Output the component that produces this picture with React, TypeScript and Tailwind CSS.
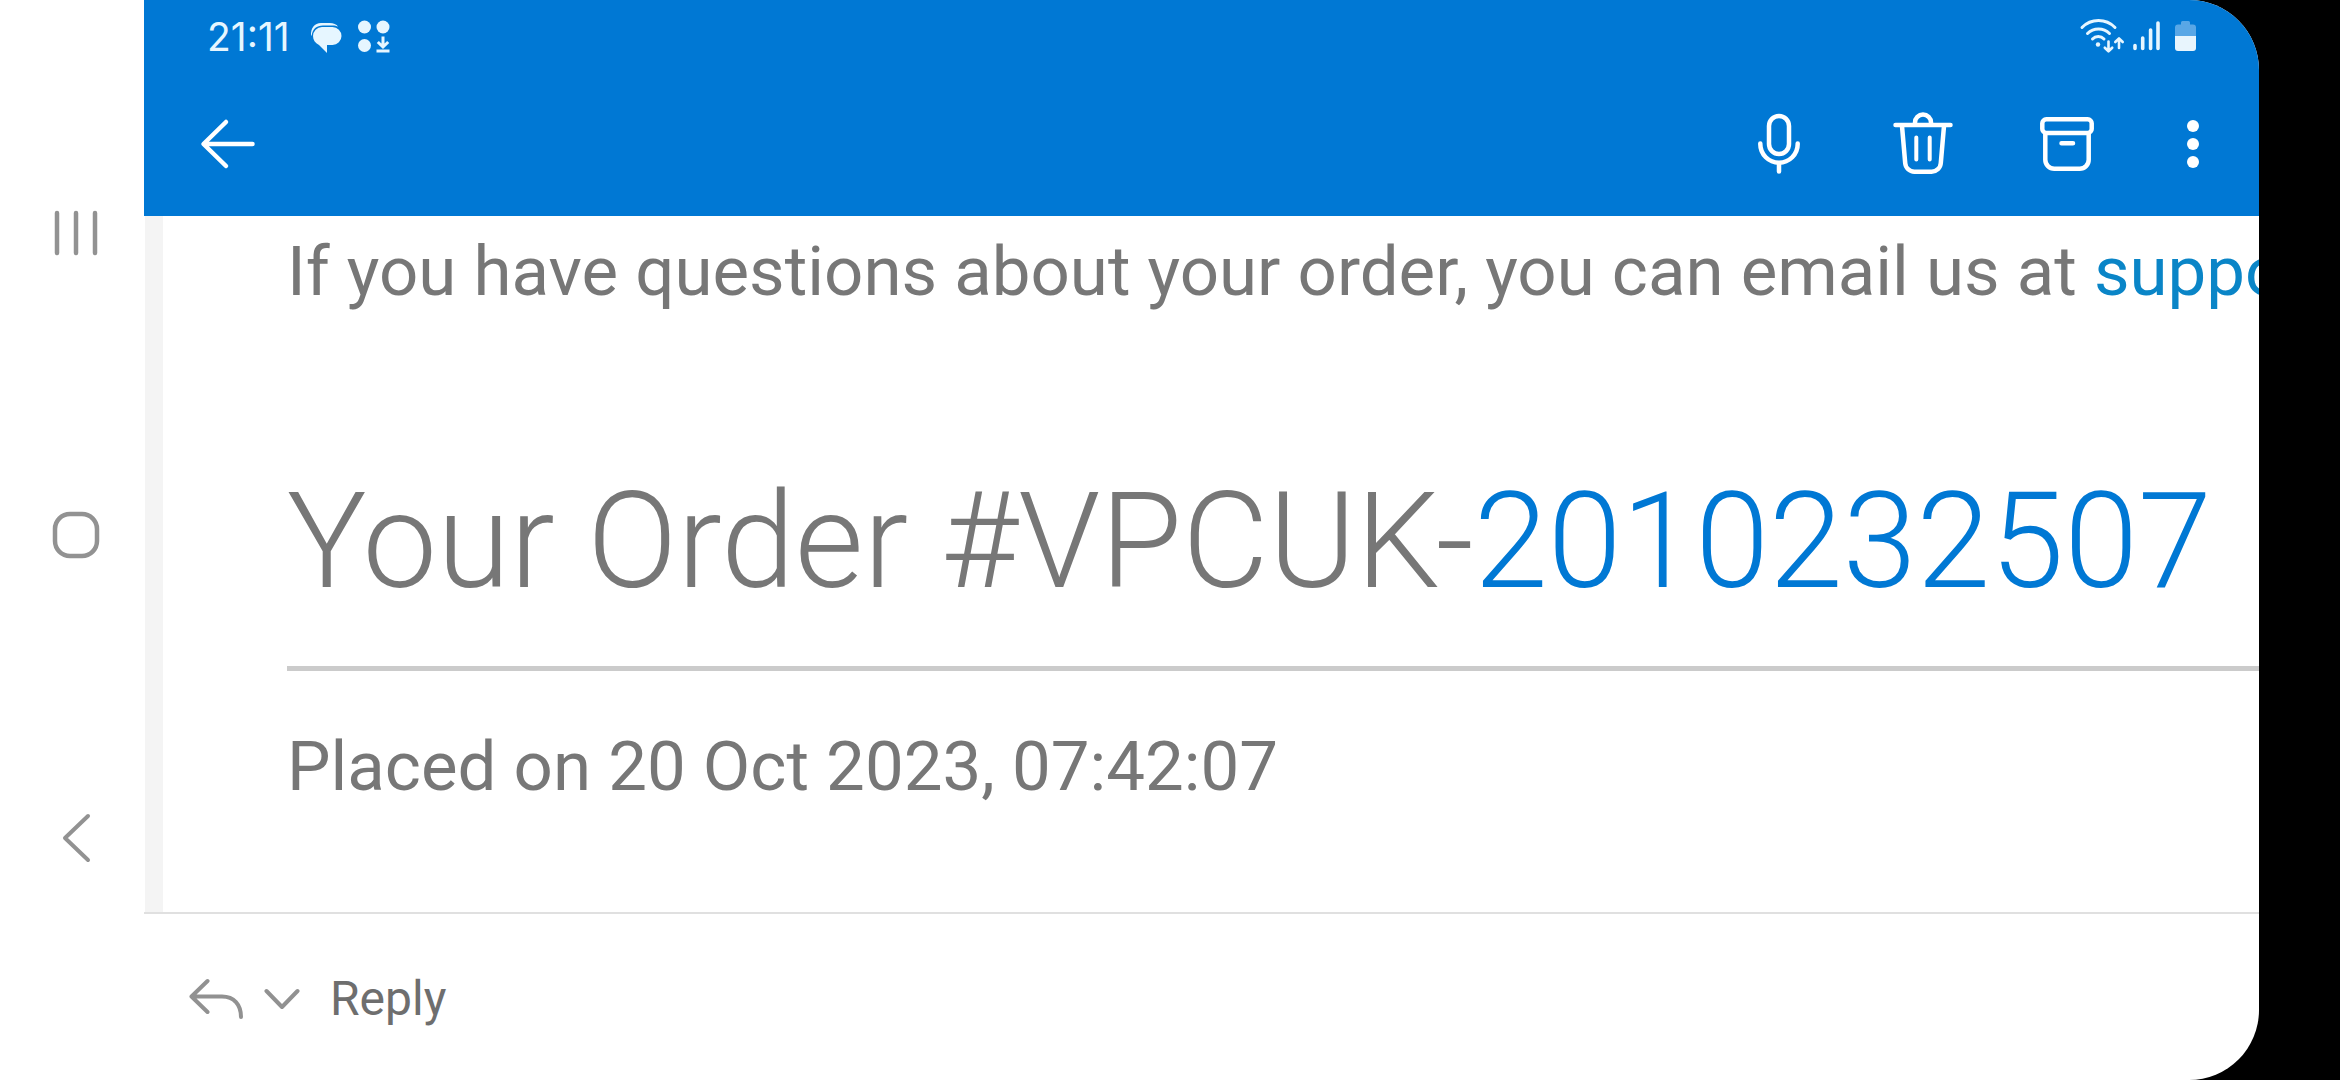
import type { ReactNode } from "react";

const Icon = ({ children }: { children: ReactNode }) => (
  <svg
    viewBox="0 0 72 72"
    className="w-18 h-18"
    fill="none"
    stroke="currentColor"
    strokeWidth="4.5"
    strokeLinecap="round"
    strokeLinejoin="round"
    aria-hidden="true"
  >
    {children}
  </svg>
);

function SystemNav() {
  return (
    <nav className="flex flex-col shrink-0 w-36 pt-[82px] pb-[91px] pl-2 text-[#929292]">
      <button aria-label="Recent apps" className="flex-1 flex items-center justify-center">
        <Icon>
          <path d="M17 16v40M36 16v40M55 16v40" />
        </Icon>
      </button>
      <button aria-label="Home" className="flex-1 flex items-center justify-center">
        <Icon>
          <rect x="15" y="15" width="42" height="42" rx="15" />
        </Icon>
      </button>
      <button aria-label="Back" className="flex-1 flex items-center justify-center">
        <Icon>
          <path d="M48 14L25 36l23 22" strokeWidth="4" />
        </Icon>
      </button>
    </nav>
  );
}

function StatusBar() {
  return (
    <div className="flex items-center h-18 pl-[63px] pr-[63px] text-[#e6f6ff]">
      <span className="font-[Inter,sans-serif] text-[39px] leading-none">21:11</span>

      {/* Notifications */}
      <svg viewBox="0 0 32 32" className="w-8 h-8 ml-5 mt-1" fill="currentColor" aria-hidden="true">
        <path d="M1 13.5C.6 6 4.5 1 11 1h8.5c4 0 7 1.3 8.5 3.6C26.5 3.7 24.8 3.400 22.500 3.400H13C6.500 3.400 2.500 7 1.700 13.500z" />
        <path d="M12 5h10.500a9 9 0 0 1 0 18H17v8l-8-8C5 21 3 18 3 14a9 9 0 0 1 9-9z" />
      </svg>
      <svg viewBox="0 0 32 34" className="w-8 h-[34px] ml-4" fill="currentColor" aria-hidden="true">
        <circle cx="6.500" cy="8" r="6.500" />
        <circle cx="25" cy="8" r="6.500" />
        <circle cx="6.500" cy="26.500" r="6.500" />
        <path
          d="M25 17.500v10M19.800 23l5.200 5 5.200-5M18.500 32h13"
          fill="none"
          stroke="currentColor"
          strokeWidth="3"
        />
      </svg>

      {/* Wifi, signal, battery */}
      <svg
        viewBox="0 0 46 36"
        className="w-[46px] h-9 ml-auto"
        fill="none"
        stroke="currentColor"
        strokeWidth="3"
        strokeLinecap="round"
        strokeLinejoin="round"
        aria-hidden="true"
      >
        <path d="M3 9.500A23 23 0 0 1 36 9.500M8.500 15.500a15.500 15.500 0 0 1 22 0M13.500 21a8 8 0 0 1 11.500 0" />
        <circle cx="19" cy="26.500" r="2.200" fill="currentColor" stroke="none" />
        <path d="M29.500 23.500V33M25.800 29.700l3.700 3.600 3.700-3.600M40 30V20.500M36.300 24l3.700-3.600L43.700 24" strokeWidth="2.600" />
      </svg>
      <svg
        viewBox="0 0 28 32"
        className="w-7 h-8 ml-2"
        stroke="currentColor"
        strokeWidth="3.600"
        strokeLinecap="round"
        aria-hidden="true"
      >
        <path d="M2 25.500v3M9.700 18v10.500M17.600 10v18.500M25 3v25.500" />
      </svg>
      <svg viewBox="0 0 21 32" className="w-[21px] h-8 ml-[14px]" aria-hidden="true">
        <path d="M6 2.500Q6 1 7.500 1h6Q15 1 15 2.500V4.500h3Q21 4.500 21 7.500V17H0V7.500Q0 4.500 3 4.500h3z" fill="#59a7e6" />
        <path d="M0 16h21V28Q21 31 18 31H3Q0 31 0 28z" fill="#e8f5fd" />
      </svg>
    </div>
  );
}

function AppBar() {
  return (
    <div className="flex items-center h-36 pl-12 pr-3 text-white">
      <button aria-label="Navigate up">
        <Icon>
          <path d="M34 14L11.500 36 34 58M12 36h48.500" />
        </Icon>
      </button>
      <div className="flex items-center ml-auto">
        <button aria-label="Dictate" className="w-36 flex justify-center">
          <Icon>
            <rect x="26" y="8" width="20" height="38" rx="10" />
            <path d="M17.300 35.500v.5a18.700 18.700 0 0 0 37.400 0v-.5M36 55v8.500" />
          </Icon>
        </button>
        <button aria-label="Delete" className="w-36 flex justify-center">
          <Icon>
            <path d="M8.500 17h55M28 16v-1.500a8 8 0 0 1 16 0V16" />
            <path d="M15 18l3.200 37a9.200 9.200 0 0 0 9.200 8.700h17.200a9.200 9.200 0 0 0 9.200-8.700L57 18" />
            <path d="M29.300 29.500v22M42.700 29.500v22" strokeWidth="4" />
          </Icon>
        </button>
        <button aria-label="Archive" className="w-36 flex justify-center">
          <Icon>
            <rect x="11.300" y="11.300" width="49.400" height="13.600" rx="4" />
            <path d="M14.300 26v25.700a9 9 0 0 0 9 9h25.400a9 9 0 0 0 9-9V26M30.500 35.300h11.500" />
          </Icon>
        </button>
        <button aria-label="More options" className="w-27 flex justify-center">
          <Icon>
            <g fill="currentColor" stroke="none">
              <circle cx="36" cy="18" r="6" />
              <circle cx="36" cy="36" r="6" />
              <circle cx="36" cy="54" r="6" />
            </g>
          </Icon>
        </button>
      </div>
    </div>
  );
}

function Message() {
  return (
    <main className="flex flex-1 min-h-0 pl-px overflow-hidden text-[#777777]">
      <div className="w-[18px] shrink-0 bg-[#f4f4f4]" />
      <div className="flex-1 min-w-0 pl-31 pt-[14px] whitespace-nowrap overflow-hidden">
        <p className="text-[69px] leading-[84px]">
          If you have questions about your order, you can email us at{" "}
          <a href="#support" className="text-[#0a85c7]">
            support
          </a>
        </p>
        <h1 className="mt-37 text-[133px] leading-[160px] font-light">
          Your Order #VPCUK-
          <a href="#order" className="text-[#0078d4]">
            2010232507
          </a>
        </h1>
        <hr className="mt-11 border-t-[5px] border-[#cbcbcb]" />
        <p className="mt-[54px] text-[69px] leading-[84px]">Placed on 20 Oct 2023, 07:42:07</p>
      </div>
    </main>
  );
}

function ReplyBar() {
  return (
    <footer className="flex items-center h-42 pl-11 pt-1 border-t-2 border-[#e0e0e0] text-[#919191]">
      <button aria-label="Reply to sender">
        <svg
          viewBox="0 0 56 44"
          className="w-14 h-11"
          fill="none"
          stroke="currentColor"
          strokeWidth="4"
          strokeLinecap="round"
          strokeLinejoin="round"
          aria-hidden="true"
        >
          <path d="M19.500 4L3.500 19.500l16 15.500M4 19.500h30c12 0 19 8 19 20.500" />
        </svg>
      </button>
      <button aria-label="Reply options" className="ml-5">
        <svg
          viewBox="0 0 36 44"
          className="w-9 h-11"
          fill="none"
          stroke="currentColor"
          strokeWidth="4"
          strokeLinecap="round"
          strokeLinejoin="round"
          aria-hidden="true"
        >
          <path d="M2.500 14L18 30l15.500-16" />
        </svg>
      </button>
      <button className="ml-[30px] text-[48px] leading-14 text-[#6e6e6e]">Reply</button>
    </footer>
  );
}

export default function App() {
  return (
    <div className="h-screen pr-[81px] bg-black font-[Roboto,sans-serif]">
      <div className="flex h-full bg-white rounded-r-[70px] overflow-hidden">
        <SystemNav />
        <div className="flex flex-col flex-1 min-w-0">
          <header className="bg-[#0078d4]">
            <StatusBar />
            <AppBar />
          </header>
          <Message />
          <ReplyBar />
        </div>
      </div>
    </div>
  );
}
